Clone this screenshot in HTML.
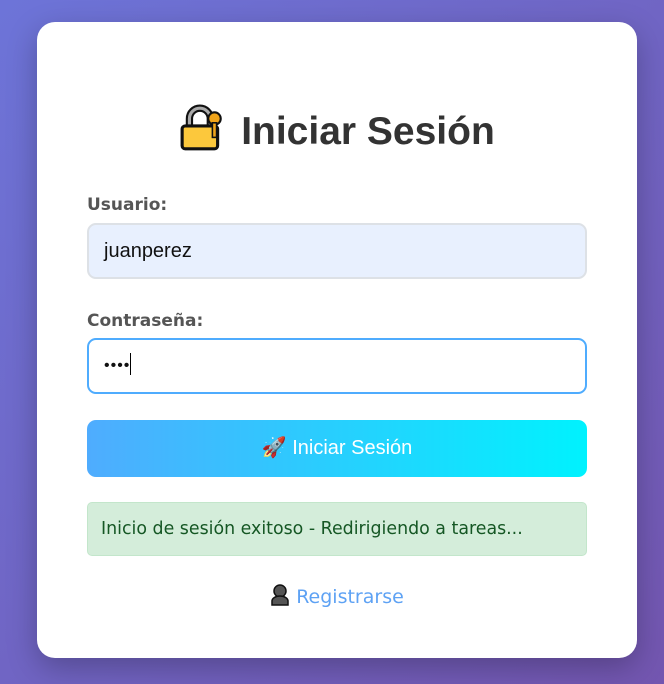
<!DOCTYPE html>
<html><head><meta charset="utf-8"><style>
*{box-sizing:border-box;margin:0;padding:0}
html,body{width:664px;height:684px;overflow:hidden}
body{background:linear-gradient(135deg,#6d74d8 0%,#7356b0 100%);font-family:"Liberation Sans","DejaVu Sans",sans-serif;position:relative}
.card{position:absolute;left:37px;top:22px;width:600px;height:636px;background:#fff;border-radius:18px;box-shadow:0 10px 30px rgba(0,0,0,.25)}
h1{position:absolute;left:0;right:0;top:82px;text-align:center;font-size:39px;font-weight:bold;color:#333;font-family:"Liberation Sans",sans-serif;height:50px;line-height:50px}
h1 svg{vertical-align:-8px;margin-right:14px}
.lbl{position:absolute;left:50px;font-weight:bold;color:#555;font-family:"DejaVu Sans",sans-serif;font-size:17px}
.inp{position:absolute;left:50px;width:500px;height:56px;border-radius:9px;font-size:20px;padding-left:15px;line-height:52px;color:#111}
.btn{position:absolute;left:50px;top:398px;width:500px;height:57px;border-radius:9px;background:linear-gradient(90deg,#4facfe,#00f2fe);color:#fff;font-size:20px;text-align:center;line-height:57px}
.msg{position:absolute;left:50px;top:480px;width:500px;height:54px;border-radius:5px;background:#d4edda;border:1px solid #c3e6cb;color:#155724;font-family:"DejaVu Sans",sans-serif;font-size:17.4px;line-height:52px;padding-left:13px}
.reg{position:absolute;left:0;right:0;top:562px;text-align:center;color:#5ea2f4;font-size:19px;font-family:"DejaVu Sans",sans-serif}
</style></head><body>
<div class="card">
<h1><svg width="48" height="48" viewBox="0 0 46 46"><path d="M10 22V14a10 10 0 0 1 20 0v8" fill="none" stroke="#111" stroke-width="7"/><path d="M10 22V14a10 10 0 0 1 20 0v8" fill="none" stroke="#aaa" stroke-width="3"/><rect x="3" y="21" width="34" height="22" rx="3" fill="#fcc83c" stroke="#111" stroke-width="3"/><circle cx="34" cy="14" r="6" fill="#f0a41a" stroke="#111" stroke-width="2"/><rect x="32" y="18" width="4" height="14" fill="#f0a41a" stroke="#111" stroke-width="1.5"/></svg>Iniciar Sesión</h1>
<div class="lbl" style="top:173px">Usuario:</div>
<div class="inp" style="top:201px;background:#e8f0fe;border:2px solid #dde1e6">juanperez</div>
<div class="lbl" style="top:289px">Contraseña:</div>
<div class="inp" style="top:316px;background:#fff;border:2px solid #4facfe;font-size:16px;letter-spacing:1px">••••<span style="display:inline-block;width:1px;height:22px;background:#000;vertical-align:-5px"></span></div>
<div class="btn"><span style="font-size:20px">🚀</span> Iniciar Sesión</div>
<div class="msg">Inicio de sesión exitoso - Redirigiendo a tareas...</div>
<div class="reg"><svg width="20" height="22" viewBox="0 0 20 22" style="vertical-align:-3px;margin-right:6px"><circle cx="10" cy="7" r="6" fill="#555" stroke="#111" stroke-width="1.5"/><path d="M2 21v-4a8 5 0 0 1 16 0v4z" fill="#555" stroke="#111" stroke-width="1.5"/></svg>Registrarse</div>
</div>
</body></html>
